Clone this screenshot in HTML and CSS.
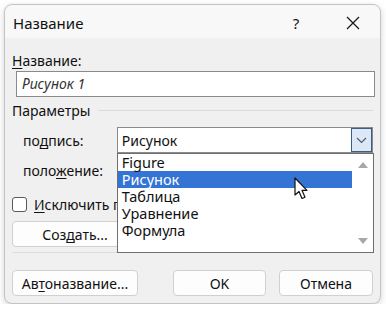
FILE: index.html
```html
<!DOCTYPE html>
<html lang="ru">
<head>
    <meta charset="UTF-8">
    <title>Название</title>
    <link rel="stylesheet" href="styles.css">
</head>
<body>

<div class="dialog">
    <div class="titlebar">
        <span class="title">Название</span>
        <span class="help">?</span>
        <span class="close">
            <svg width="14" height="14" viewBox="0 0 14 14"><path d="M1 1 L13 13 M13 1 L1 13" stroke="#1b1b1b" stroke-width="1.3" fill="none"/></svg>
        </span>
    </div>

    <div class="content">
        <div class="label"><u>Н</u>азвание:</div>
        <div class="textbox">Рисунок 1</div>

        <div class="group">
            <span>Параметры</span>
            <span class="group-line"></span>
        </div>

        <div class="row">
            <span class="row-label">по<u>д</u>пись:</span>
            <div class="combo">
                <span class="combo-text">Рисунок</span>
                <span class="combo-btn">
                    <svg width="11" height="7" viewBox="0 0 11 7"><path d="M1 1 L5.5 5.5 L10 1" stroke="#4d5c70" stroke-width="1.2" fill="none"/></svg>
                </span>

                <!-- раскрытый список поверх формы -->
                <div class="list">
                    <ul class="items">
                        <li>Figure</li>
                        <li class="selected">Рисунок</li>
                        <li>Таблица</li>
                        <li>Уравнение</li>
                        <li>Формула</li>
                    </ul>
                    <div class="scrollbar">
                        <svg width="10" height="7" viewBox="0 0 10 7"><path d="M0 7 L5 1 L10 7 Z" fill="#a8a8a8"/></svg>
                        <svg width="10" height="7" viewBox="0 0 10 7"><path d="M0 0 L5 6 L10 0 Z" fill="#a8a8a8"/></svg>
                    </div>
                    <svg class="cursor" width="15" height="24" viewBox="0 0 15 24">
                        <path d="M1 1 L1 18 L5 14.5 L8 21.5 L11 20.2 L8 13.3 L13 13.3 Z" fill="#fff" stroke="#111" stroke-width="1.2" stroke-linejoin="round"/>
                    </svg>
                </div>
            </div>
        </div>

        <div class="row">
            <span class="row-label">поло<u>ж</u>ение:</span>
        </div>

        <div class="check">
            <span class="box"></span>
            <span class="check-text"><u>И</u>сключить подпись из названия</span>
        </div>

        <div class="btn-line">
            <button class="btn btn-wide">Соз<u>д</u>ать...</button>
        </div>

        <div class="sep"></div>

        <div class="footer">
            <button class="btn btn-wide">Ав<u>т</u>оназвание...</button>
            <button class="btn btn-ok">OK</button>
            <button class="btn btn-cancel">Отмена</button>
        </div>
    </div>
</div>

</body>
</html>
```

FILE: styles.css
```css
body {
    margin: 0;
    background-color: #ffffff;
    font-family: "Noto Sans", "Open Sans", sans-serif;
    font-size: 14px;
    color: #111;
}
.dialog {
    box-sizing: border-box;
    width: 377px;
    height: 300px;
    margin: 4px 0 0 4px;
    border: 1px solid #c4c4c4;
    border-radius: 8px;
    background-color: #f0f0f0;
    box-shadow: 0 2px 6px rgba(0, 0, 0, 0.18);
}
.titlebar {
    display: flex;
    align-items: center;
    height: 33px;
    padding: 2px 4px 0 8px;
    box-sizing: border-box;
    background-color: #f8f8f8;
    border-radius: 8px 8px 0 0;
}
.title {
    flex: 1;
    font-size: 15px;
}
.help {
    width: 40px;
    margin-right: 14px;
    text-align: center;
    font-size: 15px;
}
.close {
    display: flex;
    justify-content: center;
    width: 46px;
}
.content {
    padding: 0 7px;
}
u {
    text-underline-offset: 2px;
}
.label {
    margin-top: 14px;
    line-height: 18px;
}
.textbox {
    box-sizing: border-box;
    height: 26px;
    margin: 1px -2px 0 4px;
    padding-left: 5px;
    line-height: 24px;
    border: 1px solid #8a8a8a;
    background-color: #fff;
    font-style: italic;
    color: #333;
}
.group {
    display: flex;
    align-items: center;
    margin-top: 4px;
    height: 18px;
}
.group-line {
    flex: 1;
    height: 1px;
    margin-left: 8px;
    background-color: #dcdcdc;
}
.row {
    display: flex;
    align-items: center;
    height: 26px;
    margin-top: 8px;
    padding-left: 11px;
}
.row + .row {
    margin-top: 4px;
}
.row-label {
    width: 94px;
}
.combo {
    position: relative;
    box-sizing: border-box;
    display: flex;
    align-items: center;
    width: 257px;
    height: 26px;
    padding-left: 4px;
    border: 1px solid #8a8a8a;
    background-color: #fff;
}
.combo-text {
    flex: 1;
}
.combo-btn {
    display: flex;
    align-items: center;
    justify-content: center;
    box-sizing: border-box;
    width: 21px;
    height: 24px;
    border: 1px solid #3f5c85;
    background-color: #dce8f5;
}
.list {
    position: absolute;
    top: 25px;
    left: -1px;
    z-index: 2;
    box-sizing: border-box;
    display: flex;
    width: 257px;
    height: 100px;
    border: 1px solid #6f6f6f;
    background-color: #fff;
}
.items {
    list-style: none;
    margin: 0;
    padding: 0;
    width: 234px;
}
.items li {
    height: 17px;
    line-height: 17px;
    padding-left: 4px;
    font-size: 14.5px;
    color: #111;
}
.items li.selected {
    background-color: #3474d4;
    color: #fff;
}
.scrollbar {
    flex: 1;
    display: flex;
    flex-direction: column;
    justify-content: space-between;
    align-items: center;
    padding: 7px 0 7px 2px;
}
.cursor {
    position: absolute;
    top: 23px;
    left: 176px;
}
.check {
    display: flex;
    align-items: center;
    height: 16px;
    margin-top: 13px;
}
.box {
    box-sizing: border-box;
    width: 15px;
    height: 15px;
    margin-right: 7px;
    border: 1px solid #5a5a5a;
    border-radius: 3px;
    background-color: #fff;
}
/* остаток подписи скрыт под раскрытым списком */
.check-text {
    width: 84px;
    overflow: hidden;
    white-space: nowrap;
}
.btn-line {
    margin-top: 9px;
}
.btn {
    box-sizing: border-box;
    height: 26px;
    padding: 0;
    border: 1px solid #d0d0d0;
    border-radius: 4px;
    background-color: #fdfdfd;
    font-family: inherit;
    font-size: 14px;
    color: #111;
}
.btn-wide {
    width: 126px;
}
.sep {
    height: 1px;
    margin-top: 5px;
    background-color: #dcdcdc;
}
.footer {
    display: flex;
    margin-top: 17px;
}
.btn-ok {
    width: 93px;
    margin-left: 35px;
}
.btn-cancel {
    width: 94px;
    margin-left: 13px;
}
```
